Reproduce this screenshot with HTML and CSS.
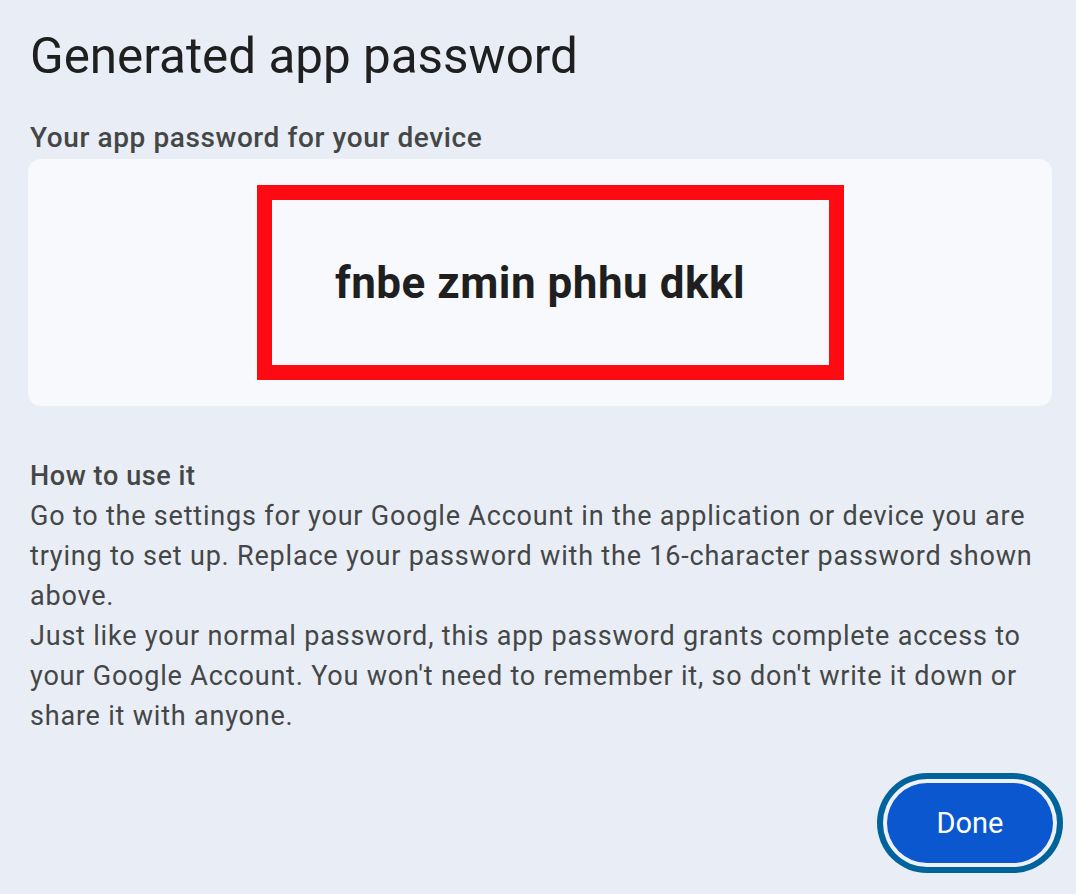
FILE: index.html
```html
<!DOCTYPE html>
<html>
<head>
<meta charset="utf-8">
<link rel="stylesheet" href="styles.css">
</head>
<body>
<main class="dialog">
  <h1 class="title">Generated app password</h1>
  <h2 class="subtitle">Your app password for your device</h2>
  <div class="card">
    <div class="highlight">
      <span class="password">fnbe zmin phhu dkkl</span>
    </div>
  </div>
  <section class="howto">
    <h3 class="howto-title">How to use it</h3>
    <p class="howto-text">Go to the settings for your Google Account in the application or device you are trying to set up. Replace your password with the 16-character password shown above.</p>
    <p class="howto-text">Just like your normal password, this app password grants complete access to your Google Account. You won't need to remember it, so don't write it down or share it with anyone.</p>
  </section>
  <div class="actions">
    <button class="done">Done</button>
  </div>
</main>
</body>
</html>
```

FILE: styles.css
```css
html, body {
  margin: 0;
  padding: 0;
  background: #e9edf6;
  min-height: 100%;
}
body {
  font-family: Roboto, "Open Sans", sans-serif;
  color: #1f1f1f;
}
.dialog {
  padding: 26px 24px 20px 28px;
  display: flex;
  flex-direction: column;
}
.title {
  margin: 0 0 0 2px;
  font-size: 49.4px;
  line-height: 60px;
  font-weight: 400;
  color: #1f1f1f;
}
.subtitle {
  margin: 35px 0 0 2px;
  font-size: 28px;
  line-height: 34px;
  font-weight: 500;
  letter-spacing: 0.6px;
  color: #444746;
}
.card {
  margin-top: 4px;
  height: 247px;
  background: #f8f9fd;
  border-radius: 13px;
  display: flex;
  align-items: center;
  justify-content: center;
  padding-left: 20px;
  box-sizing: border-box;
}
.highlight {
  width: 587px;
  height: 195px;
  box-sizing: border-box;
  border: 15px solid #fe0a12;
  display: flex;
  align-items: center;
  justify-content: center;
  padding-right: 20px;
}
.password {
  font-size: 44px;
  font-weight: 700;
  letter-spacing: 0.5px;
  color: #1f1f1f;
}
.howto {
  margin-top: 50px;
  padding-left: 2px;
}
.howto-title {
  margin: 0;
  font-size: 27px;
  line-height: 40px;
  font-weight: 500;
  letter-spacing: 0.6px;
  color: #444746;
}
.howto-text {
  margin: 0;
  font-size: 27px;
  line-height: 40px;
  letter-spacing: 0.8px;
  color: #444746;
}
.actions {
  display: flex;
  justify-content: flex-end;
  margin-top: 47px;
}
.done {
  width: 166px;
  height: 80px;
  border: none;
  border-radius: 40px;
  background: #0b57d0;
  color: #ffffff;
  font-family: Roboto, "Open Sans", sans-serif;
  font-size: 29px;
  font-weight: 400;
  margin-right: -1px;
  box-shadow: 0 0 0 4px #eef1f8, 0 0 0 10px #00639b;
}
```
